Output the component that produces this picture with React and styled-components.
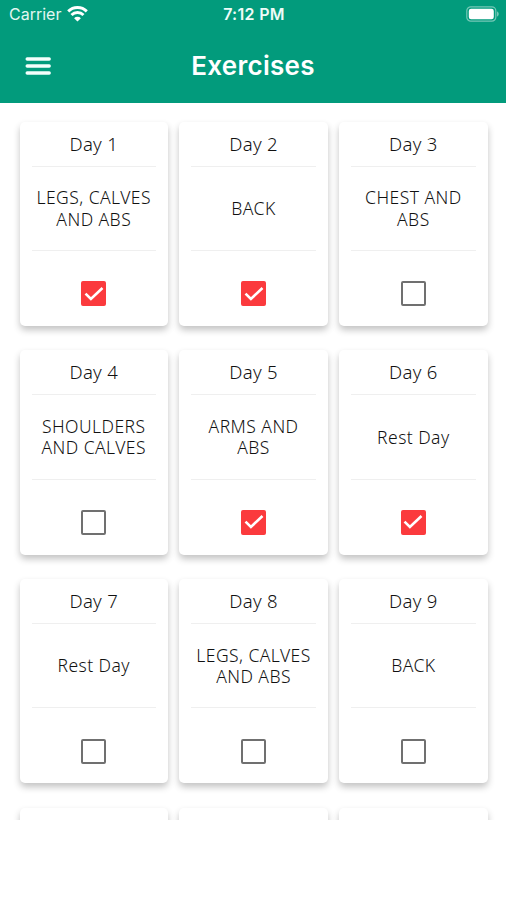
import React from "react";
import styled, { createGlobalStyle } from "styled-components";

const GlobalStyle = createGlobalStyle`
  * { box-sizing: border-box; }
  body { margin: 0; background: #fff; }
`;

const Screen = styled.div`
  width: 506px;
  height: 900px;
  background: #fff;
  overflow: hidden;
`;

const Header = styled.header`
  height: 102.5px;
  background: #029b7c;
  color: #fff;
  font-family: Inter, sans-serif;
`;

const StatusBar = styled.div`
  height: 29px;
  padding: 0 7px 0 9px;
  display: grid;
  grid-template-columns: 1fr auto 1fr;
  align-items: center;
`;

const Carrier = styled.div`
  display: flex;
  align-items: center;
  gap: 6px;
  font-size: 16px;
  line-height: 18px;
  letter-spacing: 0;
  padding-bottom: 1px;
  color: #e2f7f1;
`;

const Clock = styled.div`
  font-size: 16px;
  line-height: 18px;
  font-weight: 600;
  letter-spacing: 0.3px;
  padding-bottom: 1px;
  color: #effbf8;
`;

const Battery = styled.svg`
  justify-self: end;
  display: block;
  margin-bottom: 2px;
`;

const NavBar = styled.div`
  height: 73px;
  padding: 0 24px;
  display: grid;
  grid-template-columns: 28px 1fr 28px;
  align-items: center;
`;

const MenuButton = styled.button`
  border: 0;
  padding: 0;
  background: none;
  display: flex;
`;

const Title = styled.h1`
  margin: 0;
  text-align: center;
  font-size: 26px;
  line-height: 32px;
  font-weight: 600;
  letter-spacing: 0.3px;
`;

const List = styled.main`
  height: 717px;
  padding: 19px 18px 0 19.5px;
  overflow: hidden;
  display: grid;
  grid-template-columns: repeat(3, 148.5px);
  grid-auto-rows: 204.5px;
  column-gap: 11.3px;
  row-gap: 24.2px;
  align-content: start;
`;

const Card = styled.article`
  background: #fff;
  border-radius: 5px;
  box-shadow: 0 4px 7px rgba(0, 0, 0, 0.24);
  padding: 0 12px;
  display: grid;
  grid-template-rows: 45px 84.5px 1fr;
  font-family: "Noto Sans", sans-serif;
  font-weight: 300;
  color: #111;
  text-align: center;
`;

const Day = styled.div`
  border-bottom: 1px solid #efefef;
  font-size: 18.5px;
  line-height: 43.6px;
  letter-spacing: 0.3px;
`;

const Workout = styled.div`
  border-bottom: 1px solid #efefef;
  display: flex;
  flex-direction: column;
  justify-content: center;
  font-size: 17.5px;
  line-height: 21.5px;
  letter-spacing: 0.45px;
  padding-top: 1px;
  white-space: nowrap;
`;

const CheckArea = styled.div`
  display: flex;
  justify-content: center;
  padding-top: 30.3px;
`;

const Checkbox = styled.span`
  width: 25px;
  height: 25px;
  border-radius: 2px;
  border: 2.5px solid ${(p) => (p.$checked ? "#fb3a3d" : "#707070")};
  background: ${(p) => (p.$checked ? "#fb3a3d" : "#fff")};
  display: flex;
  align-items: center;
  justify-content: center;
`;

const days = [
  { lines: ["LEGS, CALVES", "AND ABS"], done: true },
  { lines: ["BACK"], done: true },
  { lines: ["CHEST AND", "ABS"], done: false },
  { lines: ["SHOULDERS", "AND CALVES"], done: false },
  { lines: ["ARMS AND", "ABS"], done: true },
  { lines: ["Rest Day"], done: true },
  { lines: ["Rest Day"], done: false },
  { lines: ["LEGS, CALVES", "AND ABS"], done: false },
  { lines: ["BACK"], done: false },
];

function WifiIcon() {
  return (
    <svg width="21" height="16" viewBox="0 0 21 16" fill="none" stroke="#fff">
      <path d="M1.2 5.4a13.2 13.2 0 0 1 18.6 0" strokeWidth="2.9" />
      <path d="M4.5 9a8.5 8.5 0 0 1 12 0" strokeWidth="2.9" />
      <path d="M10.5 15.6 7.1 12.2a4.8 4.8 0 0 1 6.8 0Z" fill="#fff" stroke="none" />
    </svg>
  );
}

function BatteryIcon() {
  return (
    <Battery width="33" height="16" viewBox="0 0 33 16">
      <rect x="0.8" y="0.8" width="29" height="14.4" rx="4" fill="none" stroke="#75c8b7" strokeWidth="1.2" />
      <rect x="2.8" y="2.8" width="25" height="10.4" rx="2.3" fill="#fff" />
      <path d="M31 5.2q1.8 1 1.8 2.8T31 10.8Z" fill="#75c8b7" />
    </Battery>
  );
}

function DayCard({ number, lines, done }) {
  return (
    <Card>
      <Day>Day {number}</Day>
      <Workout>
        {lines.map((line) => (
          <span key={line}>{line}</span>
        ))}
      </Workout>
      <CheckArea>
        <Checkbox role="checkbox" aria-checked={done} $checked={done}>
          {done && (
            <svg width="20" height="20" viewBox="0 0 20 20" fill="none" stroke="#fff" strokeWidth="2.6">
              <path d="m1.5 9.6 5.4 5.4L18.5 4" />
            </svg>
          )}
        </Checkbox>
      </CheckArea>
    </Card>
  );
}

export default function App() {
  return (
    <Screen>
      <GlobalStyle />
      <Header>
        <StatusBar>
          <Carrier>
            Carrier <WifiIcon />
          </Carrier>
          <Clock>7:12 PM</Clock>
          <BatteryIcon />
        </StatusBar>
        <NavBar>
          <MenuButton aria-label="Menu">
            <svg width="28" height="20" viewBox="0 0 28 20" stroke="#f4fffc" strokeWidth="3.4" strokeLinecap="round">
              <path d="M3.2 3h22M3.2 10h22M3.2 17h22" />
            </svg>
          </MenuButton>
          <Title>Exercises</Title>
        </NavBar>
      </Header>
      <List>
        {days.map((d, i) => (
          <DayCard key={i} number={i + 1} {...d} />
        ))}
        <Card />
        <Card />
        <Card />
      </List>
    </Screen>
  );
}
